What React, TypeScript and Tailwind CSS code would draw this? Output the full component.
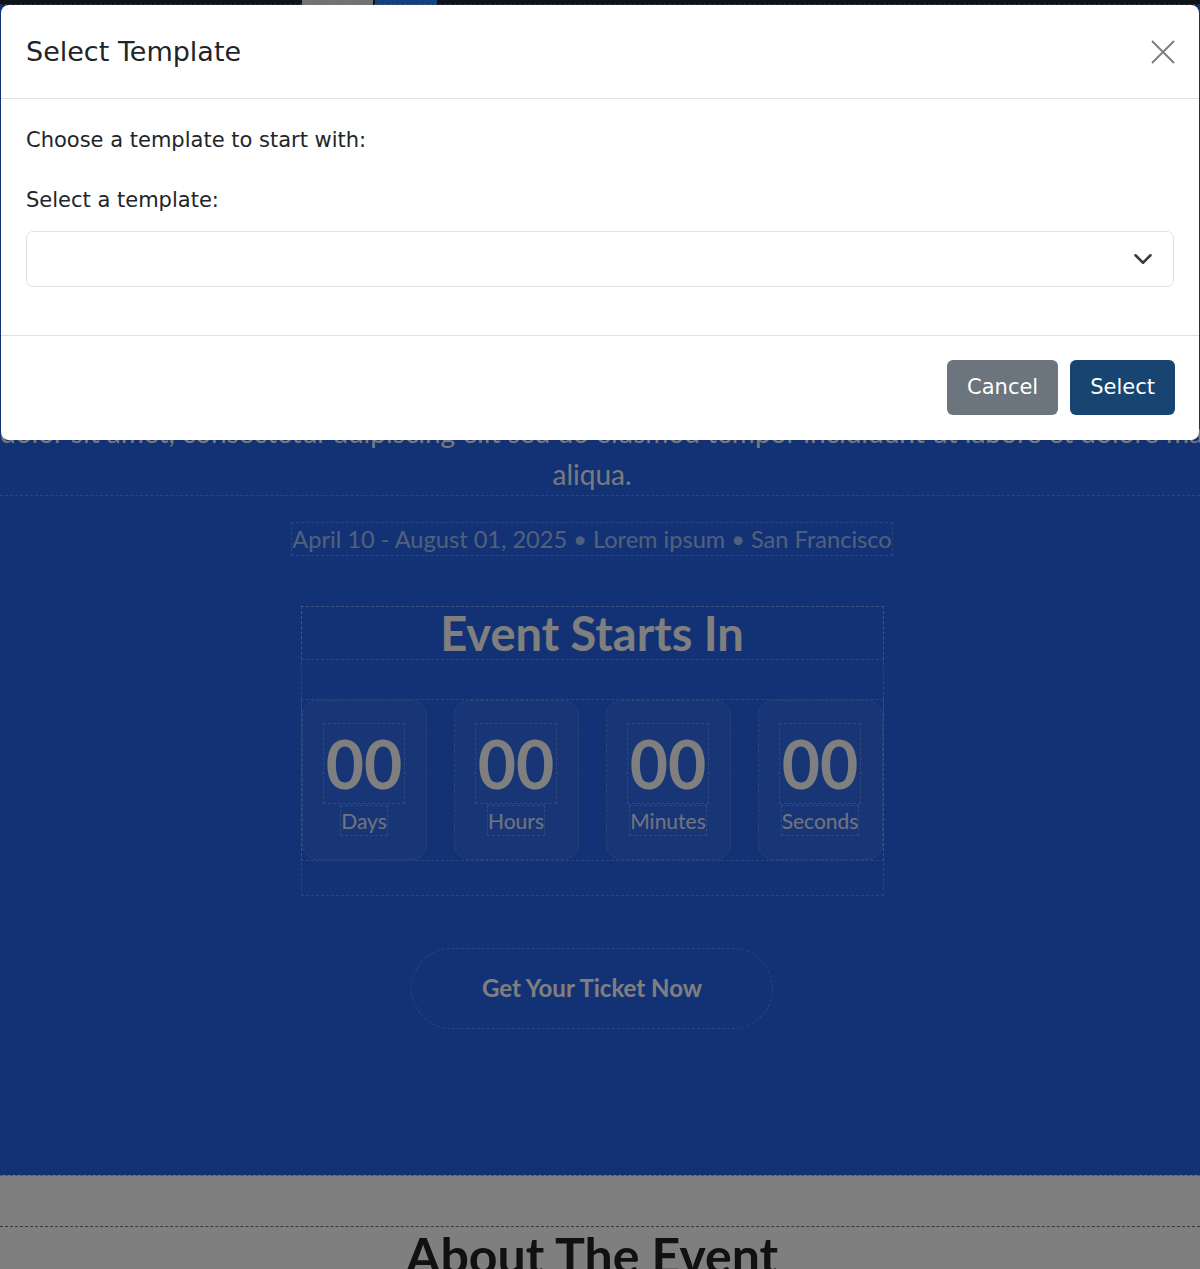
export default function App() {
  const units = ["Days", "Hours", "Minutes", "Seconds"];

  return (
    <div className="relative h-[1269px] overflow-hidden bg-white font-['Lato',sans-serif]">
      {/* top editor bar (scrolled mostly out of view) */}
      <div className="h-[5px] bg-slate-800 flex items-end overflow-hidden">
        <div className="ml-[302px] h-[5px] w-[71px] bg-gray-200" />
        <div className="ml-[2px] h-[5px] w-[62px] bg-blue-500" />
      </div>

      {/* Hero */}
      <section className="bg-[#2664ea] text-white outline outline-dashed outline-white/30 pt-[197px] pb-[146px] flex flex-col items-center">
        <div className="pr-[16px] text-[15px] tracking-widest uppercase text-white/70 mb-6">Tech Summit</div>
        <h1 className="pr-[16px] text-[64px] leading-[80px] font-bold mb-[40px]">Annual Developer Conference</h1>
        <p className="w-full pr-[16px] text-center text-[28px] leading-[42px] text-white/95 whitespace-nowrap border-b border-dashed border-white/25 mb-[27px]">
          Lorem ipsum
          <br />
          dolor sit amet, consectetur adipiscing elit sed do eiusmod tempor incididunt ut labore et dolore magna
          <br />
          aliqua.
        </p>
        <div className="w-full pr-[16px] flex flex-col items-center">
          <div className="text-[23.6px] leading-[32px] text-white/60 outline outline-dashed outline-white/25 mb-[52px]">
            April 10 - August 01, 2025 • Lorem ipsum • San Francisco
          </div>

          {/* Countdown */}
          <div className="w-[581px] outline outline-dashed outline-white/25 pb-[35px]">
            <h2 className="text-center text-[47px] leading-[52px] font-bold outline outline-dashed outline-white/25 mb-[41px]">
              Event Starts In
            </h2>
            <div className="flex justify-between outline outline-dashed outline-white/25">
              {units.map((u) => (
                <div
                  key={u}
                  className="w-[125px] h-[160px] rounded-2xl bg-white/5 border border-dashed border-white/20 flex flex-col items-center pt-[23px]"
                >
                  <div className="text-[66px] leading-[79px] font-bold outline outline-dashed outline-white/25 px-[2px]">00</div>
                  <div className="mt-[3px] text-[21px] leading-[29px] text-white/85 outline outline-dashed outline-white/25">{u}</div>
                </div>
              ))}
            </div>
          </div>

          <button className="mt-[53px] w-[362px] h-[81px] rounded-full border border-dashed border-white/25 text-[24px] font-bold text-white">
            Get Your Ticket Now
          </button>
        </div>
      </section>

      {/* About */}
      <section className="bg-white pt-[3px] pb-40 border-t border-dashed border-gray-400">
        <div className="mt-[47px] border-t border-dashed border-gray-500 pr-[16px] text-center">
          <h2 className="text-[50px] leading-[56px] font-bold text-[#222]">About The Event</h2>
          <p className="mt-10 text-[20px] text-gray-600">Lorem ipsum dolor sit amet, consectetur adipiscing elit.</p>
        </div>
      </section>

      {/* Backdrop + modal */}
      <div className="fixed inset-0 bg-black/50" />
      <div className="absolute left-px right-px top-[5px] rounded-lg bg-white text-[#212529] font-['DejaVu_Sans',sans-serif]">
        <div className="h-[94px] flex items-center justify-between pl-[25px] pr-[24px] border-b border-[#dee2e6]">
          <h5 className="text-[27px] leading-[37px]">Select Template</h5>
          <button className="w-[24px] h-[24px] flex items-center justify-center">
            <svg width="24" height="24" viewBox="0 0 24 24" fill="none">
              <path d="M1 1 23 23M23 1 1 23" stroke="#000" strokeOpacity="0.5" strokeWidth="2" />
            </svg>
          </button>
        </div>
        <div className="px-[25px] pt-[26px] pb-[48px] border-b border-[#dee2e6]">
          <p className="text-[21px] leading-[30px] mb-[30px]">Choose a template to start with:</p>
          <label className="block text-[21px] leading-[30px] mb-[16px]">Select a template:</label>
          <div className="h-[56px] rounded-[7px] border border-[#dee2e6] flex items-center justify-end pr-[20px]">
            <svg width="20" height="20" viewBox="0 0 16 16" fill="none">
              <path d="m2 5 6 6 6-6" stroke="#343a40" strokeWidth="2" strokeLinecap="round" strokeLinejoin="round" />
            </svg>
          </div>
        </div>
        <div className="flex justify-end gap-[12px] pt-[24px] pb-[25px] pr-[24px]">
          <button className="h-[55px] px-[20px] rounded-[6px] bg-[#6c757d] text-white text-[21px]">Cancel</button>
          <button className="h-[55px] px-[20px] rounded-[6px] bg-[#174470] text-white text-[21px]">Select</button>
        </div>
      </div>
    </div>
  );
}
